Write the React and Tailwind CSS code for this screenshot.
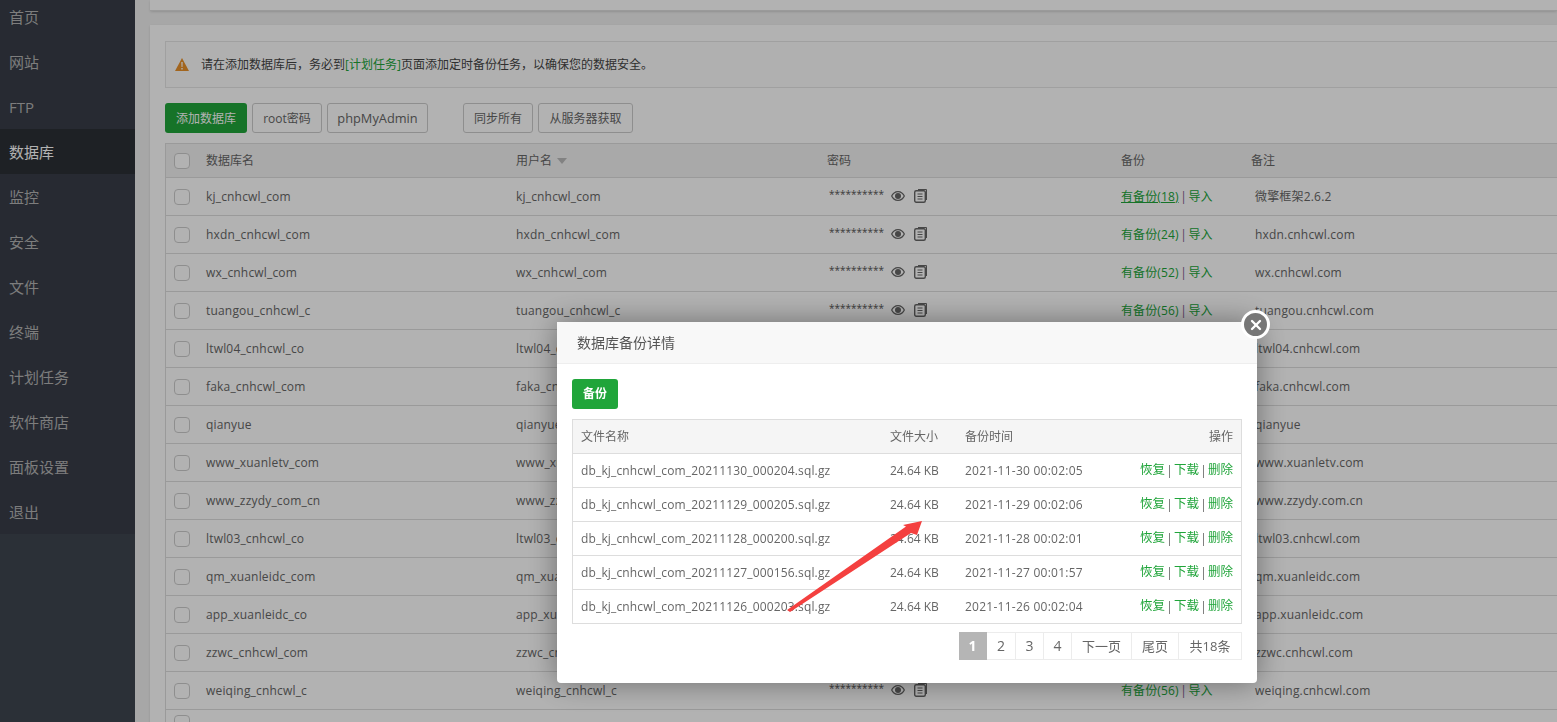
import React from 'react';
import { X } from 'lucide-react';

const menu = ['首页', '网站', 'FTP', '数据库', '监控', '安全', '文件', '终端', '计划任务', '软件商店', '面板设置', '退出'];

const rows = [
  ['kj_cnhcwl_com', 'kj_cnhcwl_com', 18, '微擎框架2.6.2'],
  ['hxdn_cnhcwl_com', 'hxdn_cnhcwl_com', 24, 'hxdn.cnhcwl.com'],
  ['wx_cnhcwl_com', 'wx_cnhcwl_com', 52, 'wx.cnhcwl.com'],
  ['tuangou_cnhcwl_c', 'tuangou_cnhcwl_c', 56, 'tuangou.cnhcwl.com'],
  ['ltwl04_cnhcwl_co', 'ltwl04_cnhcwl_co', 56, 'ltwl04.cnhcwl.com'],
  ['faka_cnhcwl_com', 'faka_cnhcwl_com', 56, 'faka.cnhcwl.com'],
  ['qianyue', 'qianyue', 56, 'qianyue'],
  ['www_xuanletv_com', 'www_xuanletv_com', 56, 'www.xuanletv.com'],
  ['www_zzydy_com_cn', 'www_zzydy_com_cn', 56, 'www.zzydy.com.cn'],
  ['ltwl03_cnhcwl_co', 'ltwl03_cnhcwl_co', 56, 'ltwl03.cnhcwl.com'],
  ['qm_xuanleidc_com', 'qm_xuanleidc_com', 56, 'qm.xuanleidc.com'],
  ['app_xuanleidc_co', 'app_xuanleidc_co', 56, 'app.xuanleidc.com'],
  ['zzwc_cnhcwl_com', 'zzwc_cnhcwl_com', 56, 'zzwc.cnhcwl.com'],
  ['weiqing_cnhcwl_c', 'weiqing_cnhcwl_c', 56, 'weiqing.cnhcwl.com'],
];

const backups = [
  ['db_kj_cnhcwl_com_20211130_000204.sql.gz', '2021-11-30 00:02:05'],
  ['db_kj_cnhcwl_com_20211129_000205.sql.gz', '2021-11-29 00:02:06'],
  ['db_kj_cnhcwl_com_20211128_000200.sql.gz', '2021-11-28 00:02:01'],
  ['db_kj_cnhcwl_com_20211127_000156.sql.gz', '2021-11-27 00:01:57'],
  ['db_kj_cnhcwl_com_20211126_000203.sql.gz', '2021-11-26 00:02:04'],
];

const Eye = () => (
  <svg width="14" height="10" viewBox="0 0 14 10" className="shrink-0">
    <path fillRule="evenodd" fill="#666" d="M7 0C3.800 0 1.200 2 0 5c1.200 3 3.800 5 7 5s5.800-2 7-5c-1.200-3-3.800-5-7-5zM7 1.200C9.200 1.200 11.500 2.600 12.700 5 11.500 7.400 9.200 8.800 7 8.800S2.500 7.400 1.300 5C2.500 2.600 4.800 1.200 7 1.200z" />
    <circle cx="7" cy="5" r="3" fill="#666" />
  </svg>
);

const Copy = () => (
  <svg width="13" height="14" viewBox="0 0 13 14" className="shrink-0">
    <path d="M4 0h8a1 1 0 0 1 1 1v10h-1V1H4z" fill="#666" />
    <rect x="0.700" y="1.700" width="10.600" height="11.600" rx="1.500" fill="none" stroke="#666" strokeWidth="1.400" />
    <path d="M3.500 5h5M3.500 7.500h5M3.500 10h5" stroke="#666" strokeWidth="1" />
  </svg>
);

const PageBtn = ({ children, className = '' }) => (
  <button className={`h-7 bg-white border-r border-y border-[#ececec] text-sm text-[#666] ${className}`}>
    {children}
  </button>
);

export default function App() {
  return (
    <div className="h-[722px] overflow-hidden flex bg-[#f0f0f0] font-['Open_Sans','Noto_Sans_CJK_SC',sans-serif] text-xs text-[#666]">
      <aside className="w-[135px] shrink-0 bg-[#3e4550]">
        <ul className="-mt-[6px] bg-[#383d48]">
          {menu.map((m) => (
            <li
              key={m}
              className={`h-[45px] pl-[9px] flex items-center text-[15px] ${m === '数据库' ? 'bg-[#2c3036] text-white' : 'text-[#b3b3b3]'}`}
            >
              {m}
            </li>
          ))}
        </ul>
      </aside>

      <main className="flex-1 min-w-0 pl-[15px]">
        <div className="h-[11px] bg-white border-b border-[#dddddd] shadow-sm" />
        <section className="mt-[14px] bg-white pl-[15px] pt-4 shadow-sm">
          <div className="h-[47px] flex items-center border border-r-0 border-[#e6e6e6] bg-[#fdfdfd] pl-[9px]">
            <svg width="14" height="13" viewBox="0 0 14 13" className="mr-[12px]">
              <path d="M7 0l7 13H0z" fill="#e8912c" />
              <path d="M6.300 4h1.400l-.2 5h-1zM6.300 10h1.400v1.500H6.300z" fill="#fff" />
            </svg>
            <span className="text-[#444]">
              请在添加数据库后，务必到<span className="text-[#20a53a]">[计划任务]</span>页面添加定时备份任务，以确保您的数据安全。
            </span>
          </div>

          <div className="mt-[15px] h-[30px] flex items-stretch">
            <button className="w-[82px] bg-[#20a53a] text-white rounded-[3px] pt-px">添加数据库</button>
            <button className="ml-[5px] w-[70px] border border-[#cccccc] bg-white rounded-[3px] pt-px">root密码</button>
            <button className="ml-[5px] w-[101px] border border-[#cccccc] bg-white rounded-[3px] text-[12.8px] pt-px">phpMyAdmin</button>
            <button className="ml-[35px] w-[70px] border border-[#cccccc] bg-white rounded-[3px] pt-px">同步所有</button>
            <button className="ml-[5px] w-[95px] border border-[#cccccc] bg-white rounded-[3px] pt-px">从服务器获取</button>
          </div>

          <div className="mt-[10px] border-l border-t border-[#dddddd]">
            <div className="h-[34px] flex items-center bg-[#f2f2f2] border-b border-[#dddddd]">
              <span className="ml-2 w-4 h-4 border border-[#cccccc] rounded-sm bg-white shrink-0" />
              <span className="ml-4 w-[310px]">数据库名</span>
              <span className="w-[311px] flex items-center gap-[5px]">
                用户名
                <span className="w-0 h-0 border-x-[5px] border-x-transparent border-t-[6px] border-t-[#bbb]" />
              </span>
              <span className="w-[294px]">密码</span>
              <span className="w-[130px]">备份</span>
              <span>备注</span>
            </div>
            {rows.map((r, i) => (
              <div key={r[0]} className="h-[38px] flex items-center border-b border-[#dddddd] tracking-[0.18px]">
                <span className="ml-2 w-4 h-4 border border-[#cccccc] rounded-sm bg-white shrink-0" />
                <span className="ml-4 w-[310px]">{r[0]}</span>
                <span className="w-[311px]">{r[1]}</span>
                <span className="w-[294px] flex items-center">
                  <span className="ml-0.5 w-[62px] text-[10px] tracking-normal text-[#555] -mt-[3px]">**********</span>
                  <span className="-mt-0.5"><Eye /></span>
                  <span className="ml-[9px] -mt-0.5"><Copy /></span>
                </span>
                <span className="w-[134px] flex items-center tracking-normal">
                  <span className={`text-[#20a53a] tracking-[0.1px] ${i === 0 ? 'underline' : ''}`}>有备份({r[2]})</span>
                  <span className="w-[10px] text-center text-[#7c5a8c]">|</span>
                  <span className="text-[#20a53a]">导入</span>
                </span>
                <span>{r[3]}</span>
              </div>
            ))}
            {/* next row is only just in view */}
            <div className="h-[38px] flex items-start pt-[5px]">
              <span className="ml-2 w-4 h-4 border border-[#cccccc] rounded-sm bg-white shrink-0" />
            </div>
          </div>
        </section>
      </main>

      {/* dim layer */}
      <div className="fixed inset-0 bg-black/30" />

      {/* backup dialog */}
      <div className="fixed left-[557px] top-[322px] w-[700px] h-[361px] bg-white rounded-sm shadow-[0_0_30px_rgba(0,0,0,0.4)]">
        <div className="h-[42px] px-5 flex items-center bg-[#f8f8f8] border-b border-[#eeeeee] text-sm text-[#555]">
          数据库备份详情
        </div>
        <div className="px-[15px] pt-[15px]">
          <button className="w-[46px] h-[30px] bg-[#20a53a] text-white text-xs font-bold rounded-[3px]">备份</button>
          <div className="mt-[10px] w-[670px] border border-[#dddddd]">
            <div className="h-[34px] flex items-center bg-[#f5f5f5] border-b border-[#dddddd] px-2">
              <span className="w-[309px]">文件名称</span>
              <span className="w-[75px]">文件大小</span>
              <span className="w-[150px]">备份时间</span>
              <span className="flex-1 text-right">操作</span>
            </div>
            {backups.map((b, i) => (
              <div key={b[0]} className={`flex items-center px-2 ${i < 4 ? 'h-[34px] border-b border-[#dddddd]' : 'h-[33px]'}`}>
                <span className="w-[309px] tracking-[0.15px]">{b[0]}</span>
                <span className="w-[75px]">24.64 KB</span>
                <span className="w-[150px] tracking-[0.25px]">{b[1]}</span>
                <span className="flex-1 flex justify-end items-center whitespace-nowrap">
                  <span className="text-[#20a53a] text-[12.5px]">恢复</span>
                  <span className="w-[9px] text-center">|</span>
                  <span className="text-[#20a53a] text-[12.5px]">下载</span>
                  <span className="w-[9px] text-center">|</span>
                  <span className="text-[#20a53a] text-[12.5px]">删除</span>
                </span>
              </div>
            ))}
          </div>
          <div className="mt-2 w-[670px] flex justify-end">
            <PageBtn className="w-7 !bg-[#b5b5b5] !text-white !border-[#b5b5b5] font-bold">1</PageBtn>
            <PageBtn className="w-[29px]">2</PageBtn>
            <PageBtn className="w-7">3</PageBtn>
            <PageBtn className="w-7">4</PageBtn>
            <PageBtn className="w-[60px] !text-[13px]">下一页</PageBtn>
            <PageBtn className="w-[47px] !text-[13px]">尾页</PageBtn>
            <PageBtn className="w-[63px] !text-[13px]">共18条</PageBtn>
          </div>
        </div>
      </div>

      {/* close button sits over the dialog corner */}
      <button className="fixed left-[1241px] top-[310px] w-[29px] h-[29px] rounded-full bg-[#777] border-[3px] border-white flex items-center justify-center">
        <X size={16} color="#fff" strokeWidth={3.5} />
      </button>

      {/* annotation arrow */}
      <svg className="fixed inset-0 pointer-events-none" width="1557" height="722" viewBox="0 0 1557 722">
        <path d="M787 610L906 526.500 903 525 922 521 917 535 911 533 790 612z" fill="#f4403f" />
      </svg>
    </div>
  );
}
